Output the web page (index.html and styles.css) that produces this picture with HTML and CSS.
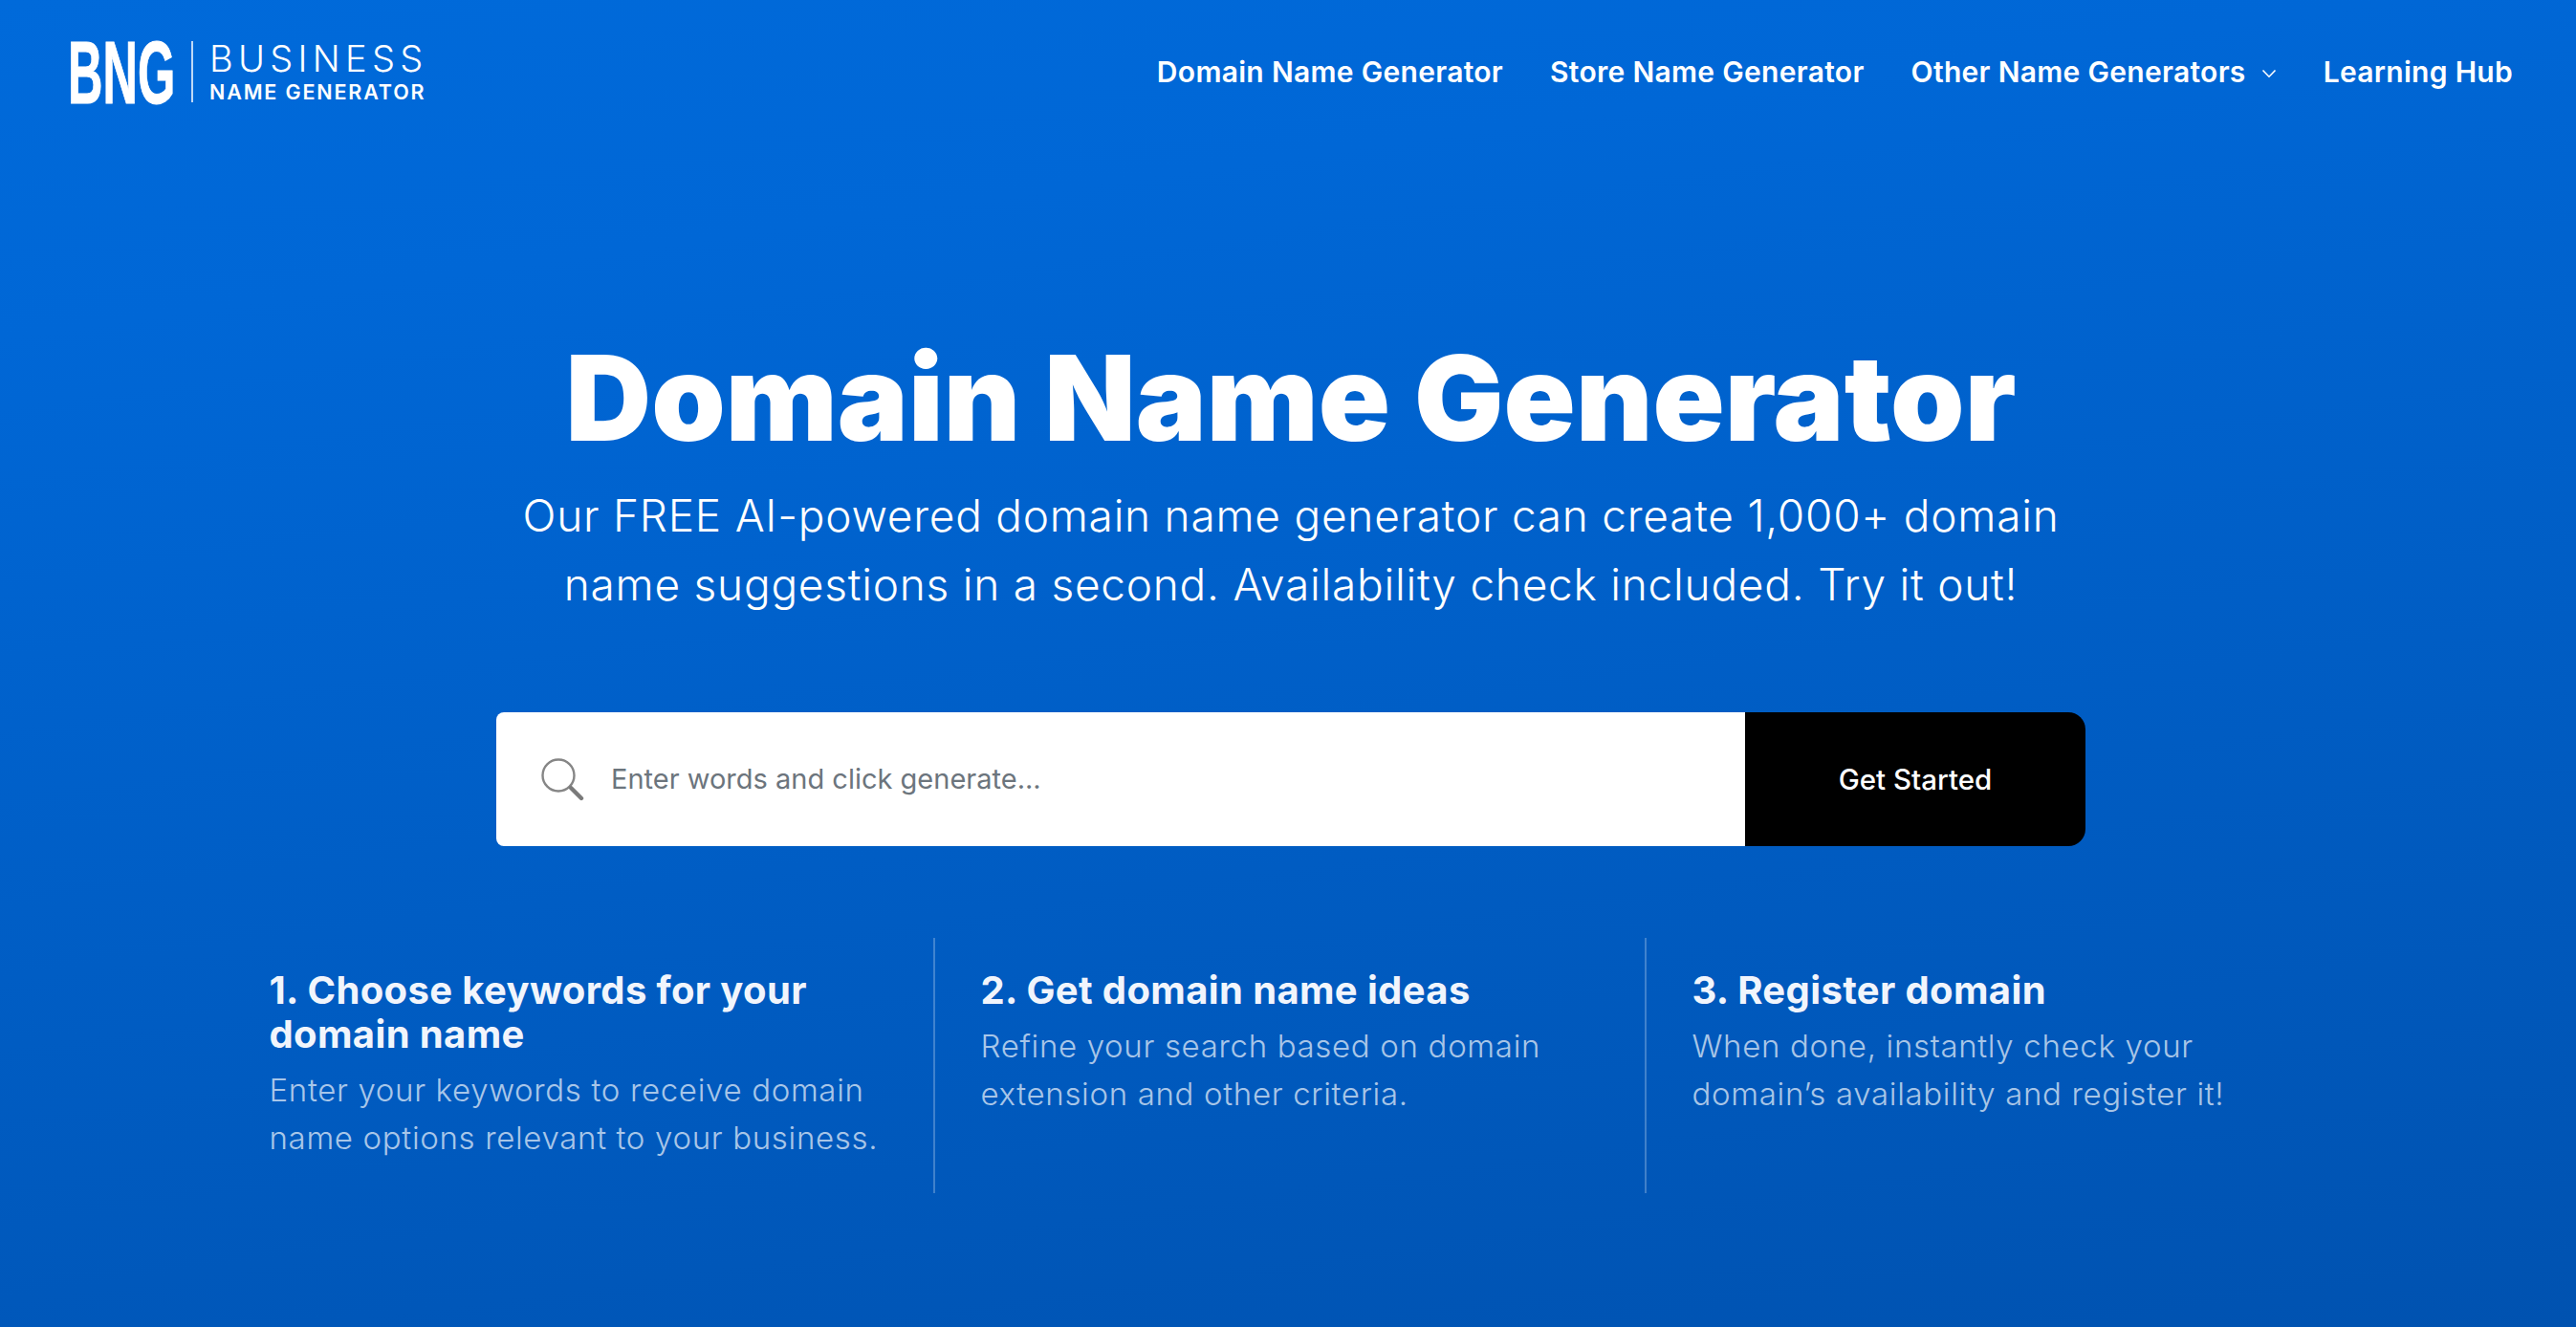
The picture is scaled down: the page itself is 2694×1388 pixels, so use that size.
FILE: index.html
```html
<!DOCTYPE html>
<html lang="en">
<head>
<meta charset="utf-8">
<title>Domain Name Generator</title>
<link rel="stylesheet" href="styles.css">
</head>
<body>
<div class="page">
  <header class="header">
    <a class="logo" href="#">
      <svg class="logo-mark" width="112" height="106" viewBox="0 0 204 106" preserveAspectRatio="none"><text class="logo-mark-text" x="0" y="86">BNG</text></svg>
      <span class="logo-sep"></span>
      <span class="logo-words">
        <span class="logo-top">BUSINESS</span>
        <span class="logo-bottom">NAME GENERATOR</span>
      </span>
    </a>
    <nav class="nav">
      <a href="#">Domain Name Generator</a>
      <a href="#">Store Name Generator</a>
      <a href="#" class="has-caret">Other Name Generators
        <svg width="16" height="10" viewBox="0 0 16 10" class="caret"><path d="M1.5 1.5 8 8.2l6.5-6.7" fill="none" stroke="#fff" stroke-width="1.6"/></svg>
      </a>
      <a href="#">Learning Hub</a>
    </nav>
  </header>
  <main class="hero">
    <h1 class="title">Domain Name Generator</h1>
    <p class="lead">Our FREE AI-powered domain name generator can create 1,000+ domain<br>name suggestions in a second. Availability check included. Try it out!</p>
    <form class="search">
      <div class="search-field">
        <svg class="search-icon" width="46" height="46" viewBox="0 0 46 46"><circle cx="19" cy="19" r="16.5" fill="none" stroke="#868686" stroke-width="2.4"/><path d="M32 32 43 43" stroke="#7a7a7a" stroke-width="4.4" stroke-linecap="round"/></svg>
        <input class="search-input" type="text" placeholder="Enter words and click generate...">
      </div>
      <button class="search-btn" type="button">Get Started</button>
    </form>
    <section class="steps">
      <div class="step">
        <h3>1. Choose keywords for your domain name</h3>
        <p>Enter your keywords to receive domain name options relevant to your business.</p>
      </div>
      <div class="step">
        <h3>2. Get domain name ideas</h3>
        <p>Refine your search based on domain extension and other criteria.</p>
      </div>
      <div class="step">
        <h3>3. Register domain</h3>
        <p>When done, instantly check your domain’s availability and register it!</p>
      </div>
    </section>
  </main>
</div>
</body>
</html>
```
FILE: styles.css
```css
* { box-sizing: border-box; }
html, body { margin: 0; padding: 0; }
body {
  font-family: "Inter", "Noto Sans", sans-serif;
  color: #fff;
  background: #0052ad;
}
.page {
  width: 2694px;
  height: 1388px;
  overflow: hidden;
  background: linear-gradient(172deg, #006ada 0%, #0067d6 20%, #0052b0 100%);
}
.header {
  height: 150px;
  padding: 0 66px 0 71px;
  display: flex;
  align-items: center;
  justify-content: space-between;
}
.logo {
  display: flex;
  align-items: center;
  color: #fff;
  text-decoration: none;
}
.logo-mark { display: block; }
.logo-mark-text {
  font-family: "Liberation Sans", sans-serif;
  font-weight: 700;
  font-size: 92px;
  fill: #fff;
  stroke: #fff;
  stroke-width: 1px;
}
.logo-sep {
  width: 2px;
  height: 64px;
  margin: 0 17px 0 17px;
  background: rgba(255,255,255,.75);
}
.logo-words { display: flex; flex-direction: column; gap: 11px; }
.logo-top {
  font-size: 38px;
  line-height: 30px;
  font-weight: 300;
  letter-spacing: 5.3px;
}
.logo-bottom {
  font-size: 21.5px;
  line-height: 18px;
  font-weight: 600;
  letter-spacing: 1.85px;
}
.nav { display: flex; align-items: center; gap: 49px; }
.nav a {
  color: #fff;
  text-decoration: none;
  font-size: 30px;
  font-weight: 600;
  letter-spacing: .3px;
  white-space: nowrap;
}
.has-caret { display: flex; align-items: center; gap: 16px; }
.caret { margin-top: 3px; }
.hero { display: flex; flex-direction: column; align-items: center; padding-left: 6px; }
.title {
  margin: 201px 0 0;
  font-size: 124px;
  line-height: 130px;
  font-weight: 900;
  text-align: center;
  letter-spacing: .1px;
}
.lead {
  margin: 22px 0 0;
  font-size: 46px;
  line-height: 72px;
  font-weight: 300;
  text-align: center;
  letter-spacing: .75px;
}
.search {
  width: 1662px;
  height: 140px;
  margin-top: 98px;
  display: flex;
}
.search-field {
  flex: 1;
  display: flex;
  align-items: center;
  gap: 26px;
  padding-left: 46px;
  background: #fff;
  border-radius: 8px 0 0 8px;
}
.search-icon { flex: none; }
.search-input {
  flex: 1;
  border: 0;
  outline: 0;
  background: transparent;
  font-family: inherit;
  font-size: 29px;
  color: #6c757d;
  margin-top: -2px;
}
.search-input::placeholder { color: #6c757d; opacity: 1; }
.search-btn {
  width: 356px;
  border: 0;
  background: #000;
  color: #fff;
  font-family: inherit;
  font-size: 29.5px;
  font-weight: 500;
  border-radius: 0 18px 18px 0;
}
.steps {
  width: 2232px;
  margin-top: 96px;
  display: grid;
  grid-template-columns: repeat(3, 744px);
}
.step {
  height: 267px;
  padding: 32px 40px 0 47.5px;
  border-right: 2px solid rgba(255,255,255,.25);
}
.step:last-child { border-right: 0; }
.step h3 {
  margin: 0;
  font-size: 40px;
  line-height: 46px;
  font-weight: 700;
  letter-spacing: .37px;
  color: #f1f5fc;
}
.step p {
  margin: 10px 0 0;
  font-size: 33px;
  line-height: 50px;
  font-weight: 300;
  letter-spacing: .67px;
  color: rgba(255,255,255,.68);
}
```
